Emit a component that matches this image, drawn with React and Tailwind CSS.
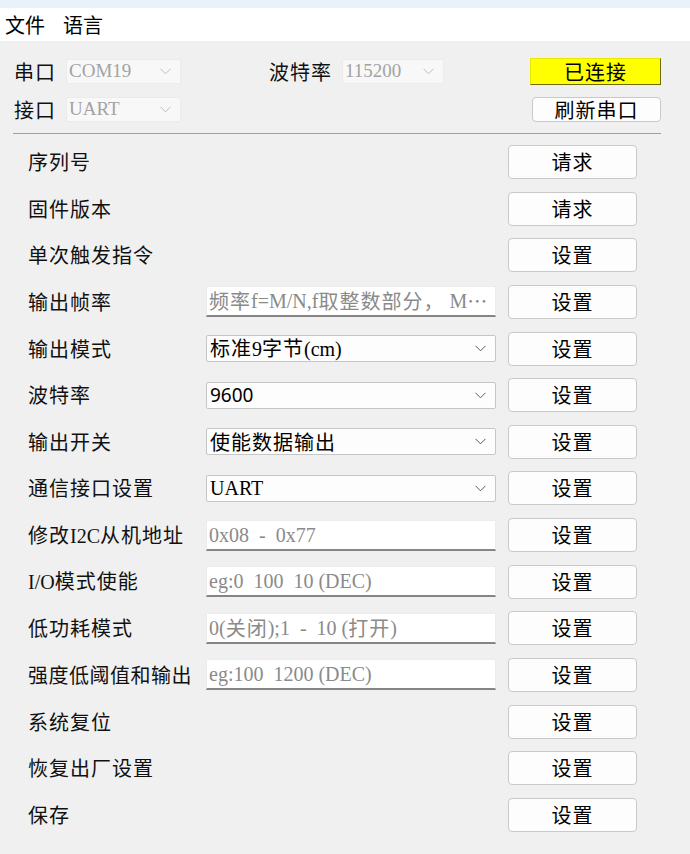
import React from "react";

const CJK_RE = /([\u2026\u3000-\u9fff\uff00-\uffef]+)/;

function Mixed({ text, latinClass = "text-[19px]", cjkClass = "tracking-[1px]" }) {
  const parts = text.split(CJK_RE).filter((p) => p.length > 0);
  return (
    <>
      {parts.map((p, i) =>
        CJK_RE.test(p) ? (
          <span key={i} className={"font-['Noto_Sans_CJK_SC',sans-serif] text-[20px] " + cjkClass}>
            {p}
          </span>
        ) : (
          <span key={i} className={"font-['Liberation_Serif','Noto_Sans_CJK_SC',serif] whitespace-pre " + latinClass}>
            {p}
          </span>
        )
      )}
    </>
  );
}

function Chevron({ color = "#5a5a5a" }) {
  return (
    <svg width="11" height="7" viewBox="0 0 11 7" className="shrink-0">
      <polyline points="0.5,0.8 5.5,5.8 10.5,0.8" fill="none" stroke={color} strokeWidth="1" />
    </svg>
  );
}

const rows = [
  { label: "序列号", btn: "请求" },
  { label: "固件版本", btn: "请求" },
  { label: "单次触发指令" },
  { label: "输出帧率", input: "频率f=M/N,f取整数部分， M…" },
  { label: "输出模式", select: "标准9字节(cm)" },
  { label: "波特率", select: "9600" },
  { label: "输出开关", select: "使能数据输出" },
  { label: "通信接口设置", select: "UART" },
  { label: "修改I2C从机地址", input: "0x08  -  0x77" },
  { label: "I/O模式使能", input: "eg:0  100  10 (DEC)" },
  { label: "低功耗模式", input: "0(关闭);1  -  10 (打开)" },
  { label: "强度低阈值和输出", input: "eg:100  1200 (DEC)", wide: true },
  { label: "系统复位" },
  { label: "恢复出厂设置" },
  { label: "保存" },
];

function Row({ r }) {
  return (
    <div className="flex h-[34px] items-center">
      <div className="w-[206px] shrink-0 overflow-hidden pl-[28px] text-[#111] whitespace-nowrap">
        <Mixed text={r.label} cjkClass={r.wide ? "tracking-[0.5px]" : "tracking-[1px]"} latinClass="text-[20px]" />
      </div>
      <div className="w-[290px] shrink-0">
        {r.input && (
          <div className="flex h-[31px] items-center overflow-hidden border border-b-2 border-[#ececec] border-b-[#858585] bg-white pl-[2px] text-[#8a8a8a] whitespace-nowrap">
            <Mixed text={r.input} latinClass="text-[20px]" />
          </div>
        )}
        {r.select && (
          <div className="flex h-[27px] items-center justify-between rounded-[2px] border border-[#c6c6c6] bg-[#fdfdfd] pl-[3px] pr-[9px] text-[#000]">
            <div className="whitespace-nowrap">
              {r.select === "9600" ? (
                <span className="font-['Noto_Sans','Liberation_Sans',sans-serif] text-[19px]">9600</span>
              ) : (
                <Mixed text={r.select} latinClass="text-[20px]" />
              )}
            </div>
            <Chevron />
          </div>
        )}
      </div>
      <button className="ml-[12px] flex h-[34px] w-[129px] shrink-0 items-center justify-center rounded-[4px] border border-[#c9c9c9] bg-[#fdfdfd] text-[#000]">
        <Mixed text={r.btn || "设置"} />
      </button>
    </div>
  );
}

function Combo({ text, width }) {
  return (
    <div
      className="flex h-[25px] shrink-0 items-center justify-between rounded-[2px] border border-[#ebebeb] bg-[#f8f8f8] pl-[2px] pr-[9px] text-[#a3a3a3]"
      style={{ width }}
    >
      <span className="font-['Liberation_Serif',serif] text-[19px]">{text}</span>
      <Chevron color="#bdbdbd" />
    </div>
  );
}

export default function App() {
  return (
    <div className="h-[854px] w-[690px] overflow-hidden bg-[#f0f0f0] font-['Noto_Sans_CJK_SC',sans-serif]">
      <div className="h-[8px] bg-[#eaf2f9]" />
      <div className="flex h-[33px] items-center gap-[18px] bg-white pl-[5px] text-[20px] text-black">
        <span>文件</span>
        <span>语言</span>
      </div>
      <div className="pl-[13px] pr-[29px] pt-[17px]">
        <div className="flex h-[27px] items-center">
          <div className="w-[53px] shrink-0 pl-px text-[#111]">
            <Mixed text="串口" />
          </div>
          <Combo text="COM19" width={115} />
          <div className="ml-[88px] w-[73px] shrink-0 text-[#111]">
            <Mixed text="波特率" />
          </div>
          <Combo text="115200" width={102} />
          <button className="ml-auto flex h-[27px] w-[131px] items-center justify-center border border-[#e8e800] border-b-[#6b6b00] border-r-[#6b6b00] bg-[#ffff00] text-black">
            <Mixed text="已连接" />
          </button>
        </div>
        <div className="mt-[12px] flex h-[25px] items-center">
          <div className="w-[53px] shrink-0 pl-px text-[#111]">
            <Mixed text="接口" />
          </div>
          <Combo text="UART" width={115} />
          <button className="ml-auto flex h-[25px] w-[129px] items-center justify-center rounded-[4px] border border-[#c9c9c9] bg-[#fdfdfd] text-black">
            <Mixed text="刷新串口" />
          </button>
        </div>
        <div className="mt-[11px] h-px bg-[#a0a0a0]" />
      </div>
      <div className="mt-[11px] flex flex-col gap-[12.64px]">
        {rows.map((r, i) => (
          <Row key={i} r={r} />
        ))}
      </div>
    </div>
  );
}
